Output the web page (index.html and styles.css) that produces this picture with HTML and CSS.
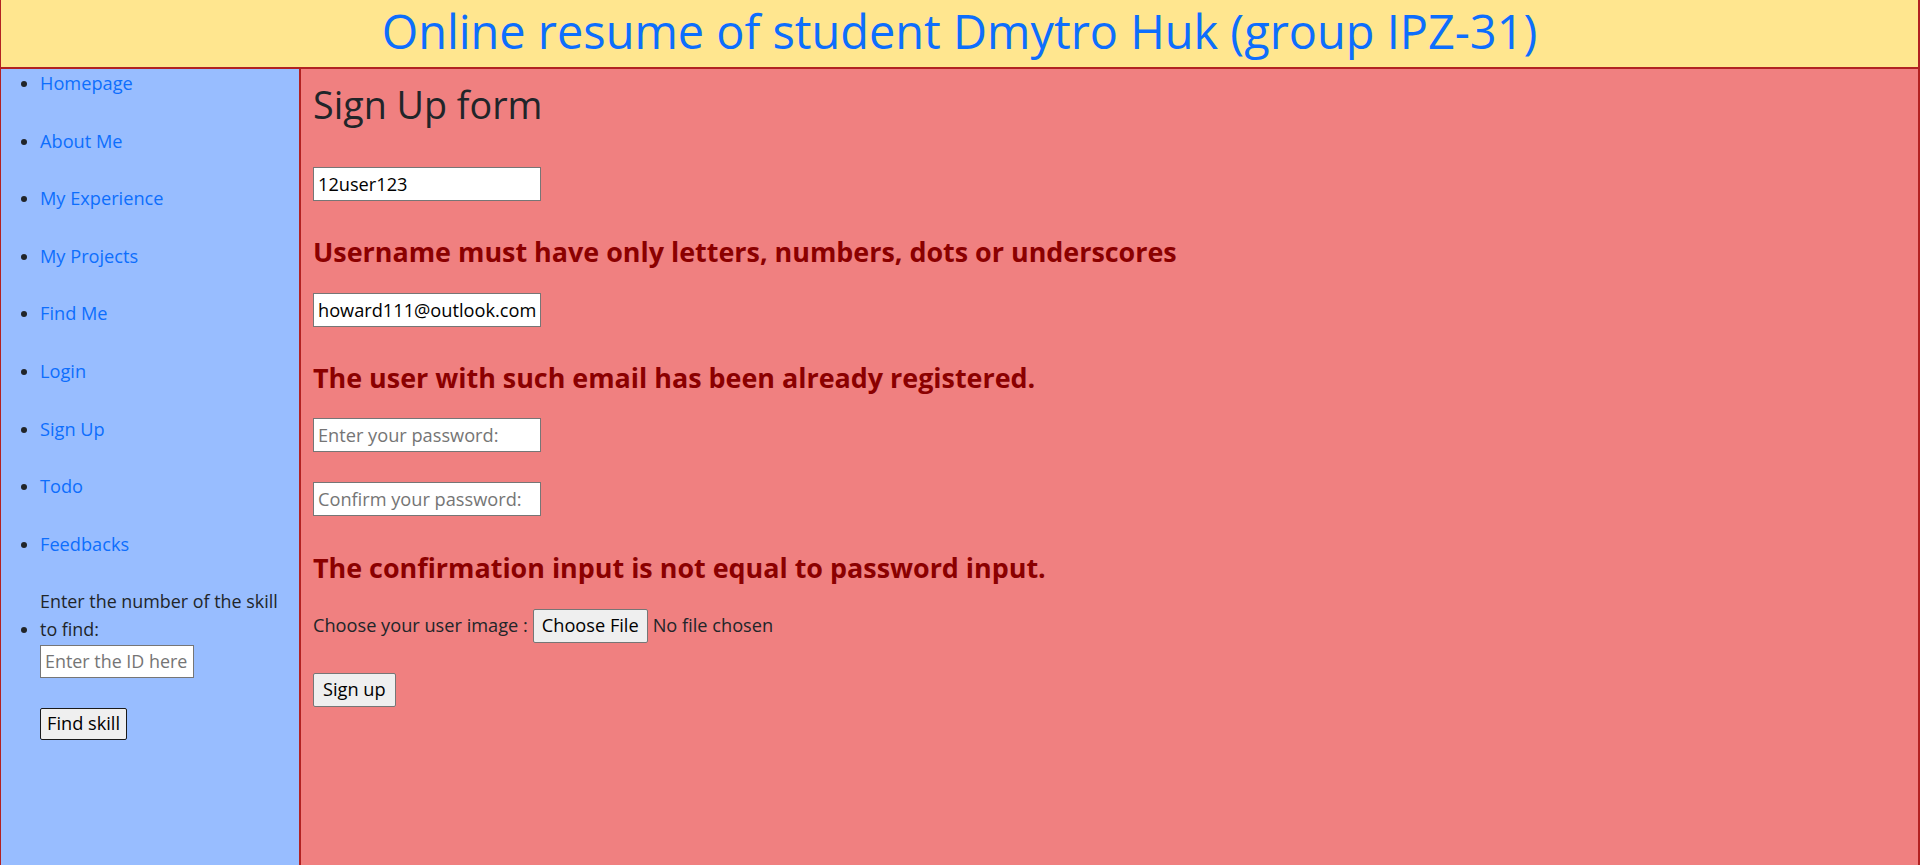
FILE: index.html
```html
<!DOCTYPE html>
<html lang="en">
<head>
<meta charset="utf-8">
<title>Sign Up</title>
<link rel="stylesheet" href="styles.css">
</head>
<body>
<header class="site-header">
  <h1 class="site-title">Online resume of student Dmytro Huk (group IPZ-31)</h1>
</header>
<div class="layout">
  <nav class="sidebar">
    <ul class="nav-list">
      <li class="nav-item"><a href="#" class="nav-link">Homepage</a></li>
      <li class="nav-item"><a href="#" class="nav-link">About Me</a></li>
      <li class="nav-item"><a href="#" class="nav-link">My Experience</a></li>
      <li class="nav-item"><a href="#" class="nav-link">My Projects</a></li>
      <li class="nav-item"><a href="#" class="nav-link">Find Me</a></li>
      <li class="nav-item"><a href="#" class="nav-link">Login</a></li>
      <li class="nav-item"><a href="#" class="nav-link">Sign Up</a></li>
      <li class="nav-item"><a href="#" class="nav-link">Todo</a></li>
      <li class="nav-item"><a href="#" class="nav-link">Feedbacks</a></li>
      <li class="nav-item nav-search">
        <span class="search-label">Enter the number of the skill to find:</span>
        <input class="search-input" type="text" placeholder="Enter the ID here">
        <button class="search-btn" type="button">Find skill</button>
      </li>
    </ul>
  </nav>
  <main class="content">
    <h2 class="form-title">Sign Up form</h2>
    <form class="signup-form">
      <input class="field" type="text" value="12user123">
      <h4 class="error">Username must have only letters, numbers, dots or underscores</h4>
      <input class="field" type="email" value="howard111@outlook.com">
      <h4 class="error">The user with such email has been already registered.</h4>
      <input class="field" type="password" placeholder="Enter your password:">
      <input class="field field-gap" type="password" placeholder="Confirm your password:">
      <h4 class="error">The confirmation input is not equal to password input.</h4>
      <div class="file-row"><label class="file-label">Choose your user image :</label> <input type="file" class="file-input"></div>
      <button class="submit-btn" type="button">Sign up</button>
    </form>
  </main>
</div>
</body>
</html>
```

FILE: styles.css
```css
html, body {
  margin: 0;
  padding: 0;
}
body {
  font-family: "Open Sans", "Noto Sans", sans-serif;
  font-size: 18.2px;
  line-height: 27.6px;
  color: #212529;
  background: #f08080;
}
.site-header {
  height: 67px;
  background: #ffe68f;
  border-left: 1px solid #b22222;
  border-right: 2px solid #b22222;
  border-bottom: 2px solid #b22222;
  text-align: center;
}
.site-title {
  margin: 0;
  font-size: 46.9px;
  line-height: 62px;
  font-weight: 400;
  color: #0d6efd;
}
.layout {
  display: flex;
  height: calc(100vh - 69px);
}
.sidebar {
  width: 298px;
  flex: none;
  background: #98bdff;
  border-left: 1px solid #b22222;
  border-right: 2px solid #b22222;
}
.nav-list {
  margin: 0;
  padding: 1px 0 0 39px;
}
.nav-item {
  margin-bottom: 30px;
}
.nav-link {
  color: #0d6efd;
  text-decoration: none;
}
.search-label {
  display: inline-block;
  font-size: 17.9px;
}
.search-input {
  display: block;
  box-sizing: border-box;
  width: 154px;
  height: 33px;
  margin: 1px 0 0 0;
  padding: 1px 4px;
  border: 1px solid #767676;
  font: inherit;
  font-size: 17.9px;
  color: #000;
  background: #fff;
}
.search-btn {
  display: block;
  height: 32px;
  margin-top: 30px;
  padding: 0 6px;
  font: inherit;
  color: #000;
  background: #efefef;
  border: 1px solid #1a1a1a;
  border-radius: 2px;
}
.content {
  flex: 1;
  padding-left: 12px;
  border-right: 2px solid #b22222;
  display: flex;
  flex-direction: column;
  align-items: flex-start;
}
.form-title {
  margin: 14px 0 0 0;
  font-size: 37.7px;
  line-height: 44px;
  font-weight: 500;
}
.signup-form {
  display: flex;
  flex-direction: column;
  align-items: flex-start;
}
.field {
  box-sizing: border-box;
  width: 228px;
  height: 34px;
  margin: 24.3px 0 0 0;
  padding: 1px 4px;
  border: 1px solid #767676;
  font: inherit;
  color: #000;
  background: #fff;
}
.form-title + .signup-form .field:first-child {
  margin-top: 39.7px;
}
.field-gap {
  margin-top: 30px;
}
.field::placeholder, .search-input::placeholder {
  color: #757575;
}
.error {
  margin: 34.6px 0 0 0;
  font-size: 26.9px;
  line-height: 33px;
  font-weight: 700;
  color: #8b0000;
}
.file-row {
  margin-top: 25px;
  height: 34px;
  display: flex;
  align-items: center;
  gap: 5px;
}
.file-input {
  font: inherit;
  color: #212529;
}
.file-input::file-selector-button {
  height: 34px;
  margin-right: 5px;
  padding: 0 8px;
  font: inherit;
  color: #000;
  background: #efefef;
  border: 1px solid #767676;
  border-radius: 2px;
}
.submit-btn {
  margin-top: 30px;
  height: 34px;
  padding: 0 9px;
  font: inherit;
  color: #000;
  background: #efefef;
  border: 1px solid #767676;
  border-radius: 2px;
}
```
